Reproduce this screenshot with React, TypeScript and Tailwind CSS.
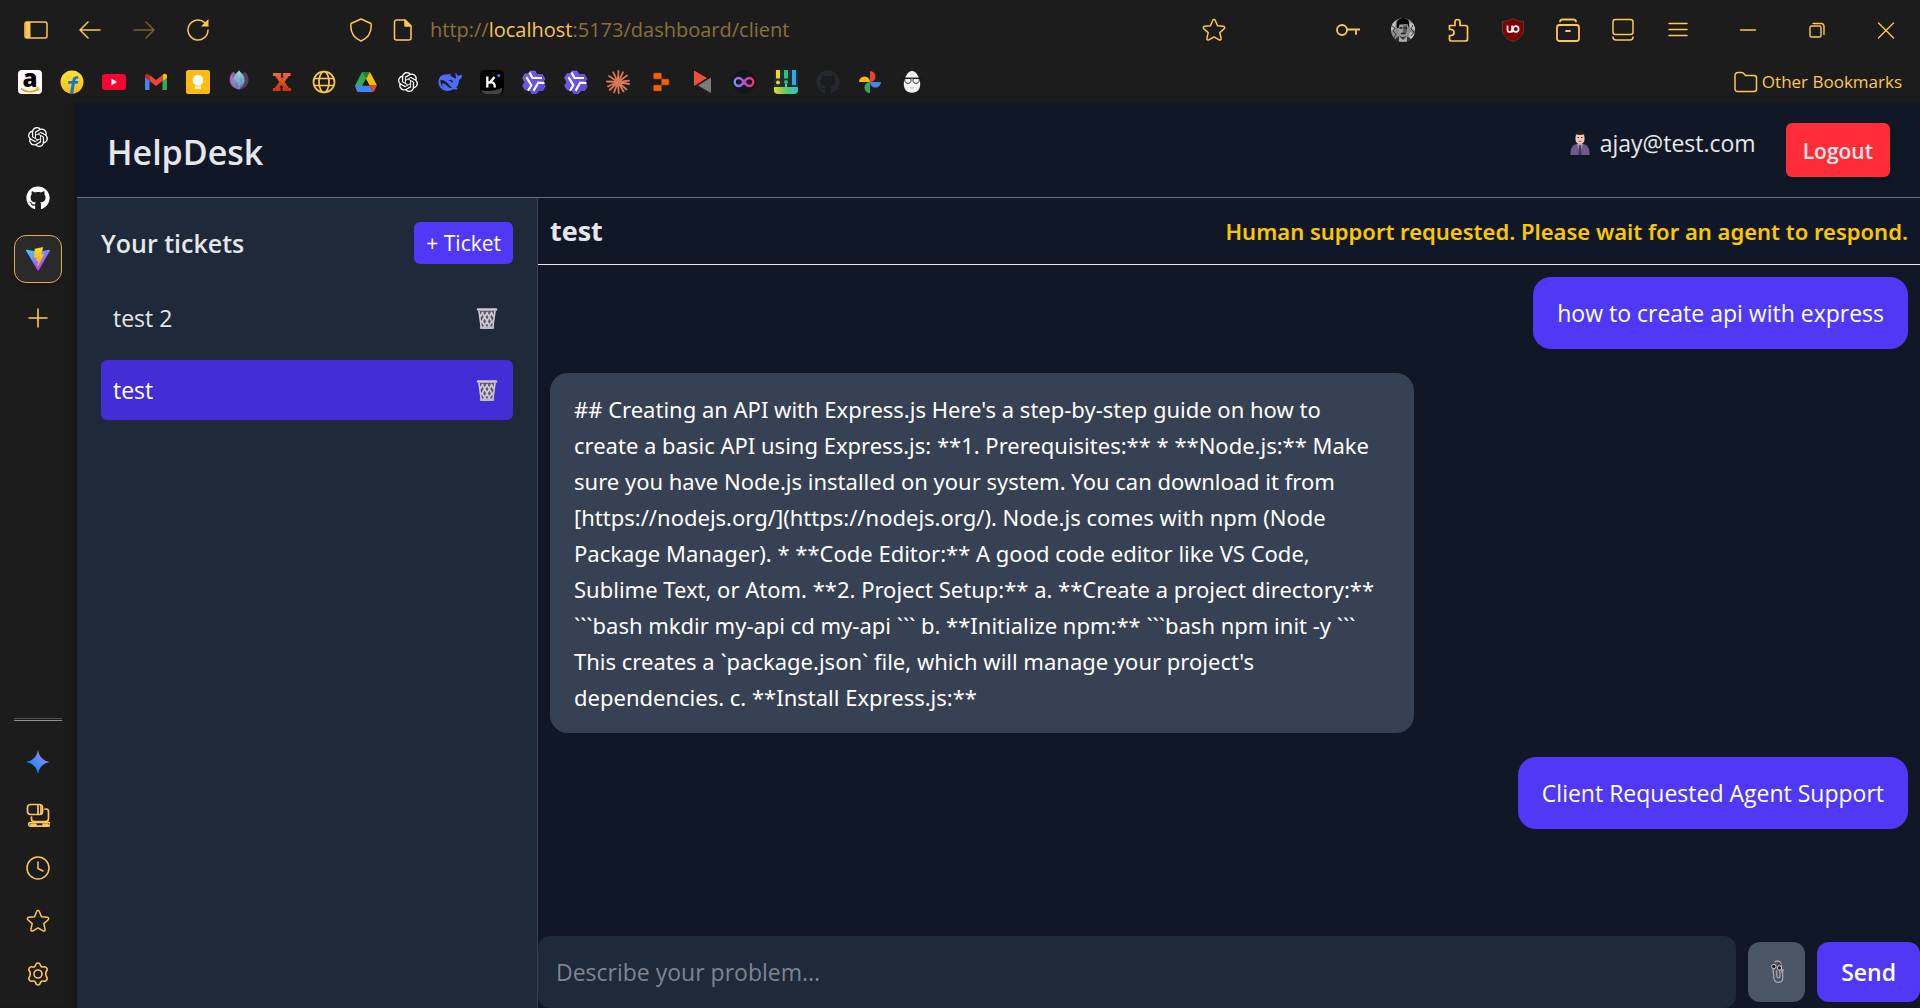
import { useState, type ReactNode } from "react";
import { FaGithub } from "react-icons/fa";
import { SiOpenai } from "react-icons/si";

/* ---------- helpers ---------- */

function Line({ children, width = 1.5 }: { children: ReactNode; width?: number }) {
  return (
    <svg
      viewBox="0 0 24 24"
      className="size-6 shrink-0"
      fill="none"
      stroke="currentColor"
      strokeWidth={width}
      strokeLinecap="round"
      strokeLinejoin="round"
      aria-hidden="true"
    >
      {children}
    </svg>
  );
}

function Art({ children }: { children: ReactNode }) {
  return (
    <svg viewBox="0 0 24 24" className="size-6 shrink-0" aria-hidden="true">
      {children}
    </svg>
  );
}

function IconButton({ label, children }: { label: string; children: ReactNode }) {
  return (
    <button type="button" aria-label={label} className="flex shrink-0 items-center justify-center">
      {children}
    </button>
  );
}

/* ---------- browser icons ---------- */

const STAR =
  "M12 1.5c.6 0 1 .3 1.200.8l2.300 5.400 5.900.600c1.200.1 1.700 1.600.8 2.400l-4.400 3.900 1.300 5.800c.300 1.200-1 2.100-2 1.500L12 18.900l-5.100 3c-1 .6-2.300-.3-2-1.500l1.300-5.800-4.400-3.900c-.9-.8-.4-2.300.8-2.400l5.900-.6 2.300-5.400c.2-.5.600-.8 1.200-.8z";

const StarIcon = () => (
  <Line>
    <path d={STAR} />
  </Line>
);

const SidebarIcon = () => (
  <Line>
    <rect x="1" y="4" width="22" height="16" rx="2" />
    <path d="M1.500 4h5v16h-5z" fill="currentColor" stroke="none" />
  </Line>
);
const BackIcon = () => (
  <Line>
    <path d="M22 12H2M10 4l-8 8 8 8" />
  </Line>
);
const ForwardIcon = () => (
  <Line>
    <path d="M2 12h20M14 4l8 8-8 8" />
  </Line>
);
const ReloadIcon = () => (
  <Line>
    <path d="M22 12a10 10 0 1 1-3.500-7.600" />
    <path d="M22.500 1v7.500H15z" fill="currentColor" stroke="none" />
  </Line>
);
const ShieldIcon = () => (
  <Line>
    <path d="M12 1l10 4.500c.8 7-1.800 14-10 17.500C3.800 19.500 1.200 12.500 2 5.500z" />
  </Line>
);
const FileIcon = () => (
  <Line>
    <path d="M5.500 2h8.500l6 6v12a2 2 0 0 1-2 2H5.500a2 2 0 0 1-2-2V4a2 2 0 0 1 2-2z" />
    <path d="M14 2v6h6z" fill="currentColor" />
  </Line>
);
const KeyIcon = () => (
  <Line width={1.8}>
    <circle cx="6" cy="12" r="5" />
    <path d="M11 11.500h12.500M20 11.500V16" />
  </Line>
);
const PuzzleIcon = () => (
  <Line width={1.7}>
    <path d="M3.500 7.500H9V4a2.500 2.500 0 0 1 5 0v3.500h5.500a2 2 0 0 1 2 2V21a2 2 0 0 1-2 2h-14a2 2 0 0 1-2-2v-3.500H5a3 3 0 0 0 0-6H3.500z" />
  </Line>
);
const ArchiveIcon = () => (
  <Line width={1.8}>
    <rect x="1" y="7" width="22" height="16" rx="2.500" />
    <path d="M4 3.500c.3-1.500 1-2 2.500-2h11c1.500 0 2.200.5 2.500 2M10 13h4" />
  </Line>
);
const TabsIcon = () => (
  <Line>
    <rect x="2" y="1.500" width="20" height="15" rx="2.500" />
    <path d="M2 19c0 2 1 3 3 3h14c2 0 3-1 3-3" />
  </Line>
);
const MenuIcon = () => (
  <Line width={1.5}>
    <path d="M3 5.500h18M3 11.500h18M3 17.500h18" />
  </Line>
);
const MinimizeIcon = () => (
  <Line width={1.4}>
    <path d="M4.500 12h15" />
  </Line>
);
const RestoreIcon = () => (
  <Line width={1.4}>
    <rect x="5" y="8" width="11" height="11" rx="1.500" />
    <path d="M8 5.500h8a3 3 0 0 1 3 3v8" />
  </Line>
);
const CloseIcon = () => (
  <Line width={1.4}>
    <path d="M4.500 5l15 15M19.500 5l-15 15" />
  </Line>
);
const FolderIcon = () => (
  <Line>
    <path d="M1 5.500a3 3 0 0 1 3-3h3.500c1 0 1.500.3 2.200 1l1.800 2H20a2.500 2.500 0 0 1 2.500 2.500v11a2.500 2.500 0 0 1-2.500 2.500H3.500A2.500 2.500 0 0 1 1 19z" />
  </Line>
);
const AvatarIcon = () => (
  <Art>
    <defs>
      <clipPath id="avatarClip">
        <circle cx="12" cy="12" r="12" />
      </clipPath>
    </defs>
    <g clipPath="url(#avatarClip)">
      <path d="M0 0h24v24H0z" fill="#8a8a8a" />
      <path d="M0 3l5-2-1 9-4 3zM18 4l6 3v5l-5-2zM19 14l5 2-2 6-4-3z" fill="#c4c4c4" />
      <path d="M1 8l3 2-2 3 3 3-2 4M22 7l-2 4 3 3-3 4" stroke="#3c3c3c" fill="none" />
      <path d="M4 24c0-5 3-6 8-6s8 2 8 6z" fill="#333" />
      <path d="M8 18l4 4 4-4v6H8z" fill="#aaa" />
      <path d="M7.500 7h9.500c0 7-.5 12-5 12S7 13 7.500 7z" fill="#9b9b9b" />
      <path d="M12 8l4-1c1 4 0 8-2 10l-2-2z" fill="#5a5a5a" />
      <path d="M6 10C4 2 9 0 13 0c4 .5 6 3 5 10l-1.500-4-8 .5L7.500 10z" fill="#080808" />
      <path d="M8.500 10h3M13.500 10h2.500M10 15.500h4" stroke="#1c1c1c" strokeWidth="1.300" />
    </g>
  </Art>
);
const UblockIcon = () => (
  <Art>
    <path
      d="M12 .5c3.500 2 6.500 2.800 10.500 3v8c0 6-4.500 9.500-10.500 12C6 21 1.500 17.500 1.500 11.500v-8C5.500 3.300 8.500 2.500 12 .5z"
      fill="#800000"
      stroke="#565050"
      strokeWidth=".7"
    />
    <path
      d="M6.500 7.500v4.200a2.300 2.300 0 0 0 4.600 0V7.500M11.100 14.500v-6"
      fill="none"
      stroke="#fff"
      strokeWidth="1.700"
    />
    <circle cx="14.800" cy="11" r="2.800" fill="none" stroke="#fff" strokeWidth="1.700" />
  </Art>
);

/* ---------- bookmark icons ---------- */

const AmazonIcon = () => (
  <span className="relative flex size-6 items-center justify-center rounded bg-white">
    <span className="pb-2 font-['Open_Sans',sans-serif] text-[24px] leading-4 font-extrabold text-black">a</span>
    <svg viewBox="0 0 24 24" className="absolute inset-0 size-6" fill="none" stroke="#ff9900" aria-hidden="true">
      <path d="M3 18.500c5 4.200 12 4.200 17 .8" strokeWidth="1.700" />
      <path d="M17.500 18.300c2-.6 3.300-.6 3.500 0s-.4 2-1.200 2.800" strokeWidth="1.100" />
    </svg>
  </span>
);
const FlipkartIcon = () => (
  <Art>
    <defs>
      <linearGradient id="flip" x1="0" y1="0" x2="0" y2="1">
        <stop offset="0" stopColor="#ffe234" />
        <stop offset="1" stopColor="#f3bd1d" />
      </linearGradient>
    </defs>
    <circle cx="12" cy="12" r="11.500" fill="url(#flip)" />
    <path
      d="M18.500 6.500c-3-1-5.500.3-6 3.200l-.3 1.300H8.500l-.6 2.800h3.800L10 23.400c1.300.2 2.300.1 3.200 0l1.600-9.600h3l.6-2.800h-3.100c.3-1.900 1.100-2.400 2.700-2z"
      fill="#1277d3"
    />
  </Art>
);
const YoutubeIcon = () => (
  <Art>
    <rect y="4" width="24" height="16" rx="3" fill="#ff0033" />
    <path d="M9.500 8.800v6.400l5.700-3.200z" fill="#fff" />
  </Art>
);
const GmailIcon = () => (
  <Art>
    <path d="M1 20h4.500V10L1 6.500z" fill="#4285f4" />
    <path d="M18.500 20H23V6.500L18.500 10z" fill="#34a853" />
    <path d="M1 7.500L5.500 11V5L4 4C2.500 3.300 1 4.500 1 6z" fill="#c5221f" />
    <path d="M18.500 11L23 7.500V6c0-2-1.700-2.700-3.200-1.900L18.500 5z" fill="#fbbc04" />
    <path d="M5.500 5L12 10l6.500-5v6L12 16 5.500 11z" fill="#ea4335" />
  </Art>
);
const KeepIcon = () => (
  <Art>
    <rect width="24" height="24" rx="2.500" fill="#fbbc12" />
    <path d="M12 5a5.200 5.200 0 0 0-3 9.500V15.500h6v-1a5.200 5.200 0 0 0-3-9.500zM9 16.500h6v2.200H9z" fill="#fff" />
  </Art>
);
const LotusIcon = () => (
  <Art>
    <defs>
      <linearGradient id="lotus" x1="0" y1="0" x2="0" y2="1">
        <stop offset="0" stopColor="#9adcd8" />
        <stop offset="1" stopColor="#576bb0" />
      </linearGradient>
    </defs>
    <path d="M5 2c-5 4-6 16 7 17.500C19 16 9 3 5 2z" fill="#8b5fa8" />
    <path d="M17 2c5 4 6 16-6 17.500C6 15 13 3 17 2z" fill="#593a66" />
    <path d="M3 5c-2 6 1 12 8 14.500L6 8z" fill="#ab73bd" />
    <path d="M11 .5c4 3.500 6 7 5.500 11-.5 3.500-3 6-5.500 8-2.500-2-5-4.500-5.500-8C5 7.500 7 4 11 .5z" fill="url(#lotus)" />
    <path d="M11 1v18M11 12L6.500 8M11 15l5-5" stroke="#b7e7e6" strokeWidth=".4" />
  </Art>
);
const XIcon = () => (
  <Art>
    <defs>
      <linearGradient id="xGrad" x1="0" y1="0" x2="0" y2="1">
        <stop offset="0" stopColor="#f06544" />
        <stop offset="1" stopColor="#cb3407" />
      </linearGradient>
    </defs>
    <path
      d="M3.500 3.500h7v2H9.500l2.500 4.200 2.800-4.200H13.500v-2h6.500v2h-1.500l-4.500 6.500 4.500 6.500h2v2h-7.500v-2h1.500L11.500 14l-3.200 4.500h1.700v2H3.500v-2H5l5-6.500-4.500-6.500h-2z"
      fill="url(#xGrad)"
      stroke="url(#xGrad)"
      strokeWidth="1.200"
    />
  </Art>
);
const GlobeIcon = () => (
  <Line width={1.7}>
    <circle cx="12" cy="12" r="10.500" />
    <ellipse cx="12" cy="12" rx="5" ry="10.500" />
    <path d="M2.500 8.500h19M2.500 15.500h19" />
  </Line>
);
const DriveIcon = () => (
  <Art>
    <path d="M8 2h8l-4 7-7 12-4-5.500z" fill="#34a853" />
    <path d="M8 2h8l7 13.500h-7.500z" fill="#fbbc04" />
    <path d="M8 2l4 7 4-7z" fill="#188038" />
    <path d="M1 15.500h7.500L5 22c-1 0-2-.5-2.500-1.500zM8.500 15.500h7L19 22H5z" fill="#4285f4" />
    <path d="M15.500 15.500H23l-2.500 5c-.4.900-.9 1.300-1.500 1.500z" fill="#ea4335" />
    <path d="M12 9l3.500 6.500h-7z" fill="#1c1c1c" />
  </Art>
);
const DeepseekIcon = () => (
  <Art>
    <path
      d="M23.700 5c-1.400-.6-2 .6-2.800 1-1-.2-1.800-.9-2.200-2.100-.2-.7-.7-1-1.200-.7-.2 1.200 0 2.500.5 3.500.3.700.3 1.400-.3 1.700-1.900-.3-3.600-1.700-5.200-2.700-.3-.2-.5-.7.1-.9 1-.3.300-.9-.6-.9-1.200 0-2.500.5-4 .6C3.500 4.200.4 7.500.5 12.300c.1 5.200 4.100 8.700 9.300 8.600 2.200 0 4.200-.7 5.700-2 1.400.7 3 .8 3.900.4 1.300-.6.200-.9-1.200-1.400 2.100-2.400 2.900-5.100 2.900-8.100 1.900-.3 3-2.700 3-4.400z"
      fill="#4d6bfe"
    />
    <path
      d="M2.500 9.800c3.700.1 6.300 2 8.500 4.900 1 1.300 1.800 2.300 3.300 3.200-1.500.4-3.100 0-4.200-1.100-1.700-1.800-3.400-3.300-5.200-3.500-1.300-.1-.8 2.700 1.100 4.500-2.500-1.400-3.900-4.800-3.500-8z"
      fill="#1c1c1c"
    />
    <path d="M11.200 10.500c1.800-.6 3 .4 3.400 2.200" fill="none" stroke="#1c1c1c" strokeWidth="1.300" />
  </Art>
);
const KimiIcon = () => (
  <Art>
    <rect width="24" height="24" rx="5" fill="#000" />
    <path d="M1 20c5 2 14 1 21-2v1.500c0 2.500-1.500 4.500-5 4.500H6c-2.500 0-4.500-1.500-5-4z" fill="#565656" opacity=".8" />
    <path d="M7.300 6.500v11M8 12.500h2L14.500 7M10 12.500c3.500-.5 4.800 1 4.800 5" fill="none" stroke="#fff" strokeWidth="2.300" />
    <circle cx="18.700" cy="5.500" r="1.500" fill="#2e8dff" />
  </Art>
);
const QwenIcon = ({ id }: { id: string }) => (
  <Art>
    <defs>
      <linearGradient id={id} x1="0" y1="0" x2="1" y2="1">
        <stop offset="0" stopColor="#7a5cf5" />
        <stop offset="1" stopColor="#5149dc" />
      </linearGradient>
    </defs>
    <path
      d="M8 1h5l2 3.500h5.500L23 9l-2 3.200 2.300 4-2.500 4.300h-4L14.500 23.500H9.700L7.800 20H3.200L.7 15.800 2.700 12 .5 8 3 3.700h3.500z"
      fill={`url(#${id})`}
      stroke="#8f7cf7"
      strokeWidth=".5"
    />
    <path
      d="M7.500 2.500l3 5.500h9.500M22.500 13l-6.300-.3-4.700 8.200M6 20.700l3.300-5.400-4.800-8.200"
      fill="none"
      stroke="#fff"
      strokeWidth="2.200"
    />
  </Art>
);
const ClaudeIcon = () => (
  <Art>
    <path
      d="M12 12L12.400 1M12 12L17 2.300M12 12L21 5.500M12 12L23 10.700M12 12L23 14M12 12L20.500 19.500M12 12L17.500 21.500M12 12L12.700 23.300M12 12L8 22.500M12 12L3.700 20M12 12L2 16.300M12 12L1 11.500M12 12L3 6M12 12L7.300 2.300"
      stroke="#d97757"
      strokeWidth="1.800"
      strokeLinecap="round"
    />
    <circle cx="12" cy="12" r="3.200" fill="#d97757" />
  </Art>
);
const ReplitIcon = () => (
  <Art>
    <path
      d="M6.500 3h6c.6 0 1 .4 1 1v5H6.500c-.6 0-1-.4-1-1V4c0-.6.4-1 1-1zM13.500 9H20c.6 0 1 .4 1 1v4c0 .6-.4 1-1 1h-6.500zM6.500 15h7v5c0 .6-.4 1-1 1h-6c-.6 0-1-.4-1-1v-4c0-.6.4-1 1-1z"
      fill="#f26207"
      stroke="#9c3d03"
      strokeWidth=".6"
    />
  </Art>
);
const TrianglesIcon = () => (
  <Art>
    <path d="M4 .500v15.500L17 8z" fill="#ef5138" />
    <path d="M21 7.500v15.500L8 15.500z" fill="#7b7b7b" />
  </Art>
);
const InfinityIcon = () => (
  <Art>
    <defs>
      <linearGradient id="inf" x1="0" x2="1">
        <stop offset="0" stopColor="#7f8cf5" />
        <stop offset=".5" stopColor="#c04ad6" />
        <stop offset="1" stopColor="#ff2d78" />
      </linearGradient>
    </defs>
    <circle cx="12" cy="12" r="11.500" fill="#10161b" />
    <path
      d="M12 12c-1.800-2.600-3.200-4-5.300-4a4 4 0 0 0 0 8c2.100 0 3.500-1.400 5.300-4s3.200-4 5.300-4a4 4 0 0 1 0 8c-2.100 0-3.500-1.400-5.300-4z"
      fill="none"
      stroke="url(#inf)"
      strokeWidth="2.400"
    />
  </Art>
);
const PipesIcon = () => (
  <Art>
    <defs>
      <linearGradient id="pipes" x1="0" x2="1">
        <stop offset="0" stopColor="#f2d21a" />
        <stop offset=".5" stopColor="#5cc96b" />
        <stop offset="1" stopColor="#38bfc4" />
      </linearGradient>
    </defs>
    <rect width="24" height="24" rx="4" fill="#18303c" />
    <path d="M0 17h24v3a4 4 0 0 1-4 4H4a4 4 0 0 1-4-4z" fill="url(#pipes)" />
    <path d="M2 0h4v8.500H2z" fill="#ffd21f" />
    <circle cx="4" cy="12.500" r="2" fill="#ffd21f" />
    <path d="M10 0h4v8.500h-4z" fill="#2bc275" />
    <circle cx="12" cy="12" r="2" fill="#2bc275" />
    <path d="M11 14h2v4h-2z" fill="#5cc96b" />
    <path d="M18 0h4v15h-4z" fill="#2fa9e0" />
  </Art>
);
const PhotosIcon = () => (
  <Art>
    <path d="M12 12V1a5.500 5.500 0 0 1 0 11z" fill="#ea4335" />
    <path d="M12 12h11a5.500 5.500 0 0 1-11 0z" fill="#4285f4" />
    <path d="M12 12v11a5.500 5.500 0 0 1 0-11z" fill="#34a853" />
    <path d="M12 12H1a5.500 5.500 0 0 1 11 0z" fill="#fbbc04" />
  </Art>
);
const EggheadIcon = () => (
  <Art>
    <path d="M12 1c4.500 0 8.200 7.500 8.200 13 0 5.500-3.200 8.700-8.200 8.700S3.800 19.500 3.800 14C3.800 8.500 7.500 1 12 1z" fill="#f4f4f4" />
    <path
      d="M1.500 8h21M4.800 8.500h6.200v2c0 1.900-1.200 2.800-2.900 2.800s-3.300-.9-3.300-2.800zM13 8.500h6.200v2c0 1.900-1.600 2.800-3.300 2.800S13 12.400 13 10.500z"
      fill="none"
      stroke="#111"
      strokeWidth=".9"
    />
    <path d="M10 17.500c1.500.6 2.500.6 4 0" fill="none" stroke="#999" strokeWidth=".7" />
  </Art>
);

const bookmarks: { name: string; icon: ReactNode }[] = [
  { name: "Amazon", icon: <AmazonIcon /> },
  { name: "Flipkart", icon: <FlipkartIcon /> },
  { name: "YouTube", icon: <YoutubeIcon /> },
  { name: "Gmail", icon: <GmailIcon /> },
  { name: "Keep", icon: <KeepIcon /> },
  { name: "Lotus", icon: <LotusIcon /> },
  { name: "X", icon: <XIcon /> },
  { name: "Website", icon: <GlobeIcon /> },
  { name: "Drive", icon: <DriveIcon /> },
  { name: "ChatGPT", icon: <SiOpenai className="m-0.5 size-5 text-white" /> },
  { name: "DeepSeek", icon: <DeepseekIcon /> },
  { name: "Kimi", icon: <KimiIcon /> },
  { name: "Qwen", icon: <QwenIcon id="qwenA" /> },
  { name: "Qwen Chat", icon: <QwenIcon id="qwenB" /> },
  { name: "Claude", icon: <ClaudeIcon /> },
  { name: "Replit", icon: <ReplitIcon /> },
  { name: "Play", icon: <TrianglesIcon /> },
  { name: "Infinity", icon: <InfinityIcon /> },
  { name: "Pipes", icon: <PipesIcon /> },
  { name: "GitHub", icon: <FaGithub className="size-6 text-[#24292f]" /> },
  { name: "Photos", icon: <PhotosIcon /> },
  { name: "Egghead", icon: <EggheadIcon /> },
];

/* ---------- rail icons ---------- */

const ViteIcon = () => (
  <Art>
    <defs>
      <linearGradient id="viteA" x1="0" y1="0" x2=".6" y2="1">
        <stop offset="0" stopColor="#41d1ff" />
        <stop offset="1" stopColor="#bd34fe" />
      </linearGradient>
      <linearGradient id="viteB" x1="0" y1="0" x2="0" y2="1">
        <stop offset="0" stopColor="#ffd930" />
        <stop offset="1" stopColor="#ffa800" />
      </linearGradient>
    </defs>
    <path d="M23.900 3.700L12.700 23.500c-.2.400-.8.400-1 0L.1 3.700c-.3-.5.100-1 .6-.9L12.200 4.800 23.300 2.800c.5-.1.900.4.600.9z" fill="url(#viteA)" />
    <path d="M17.200.1L9 1.700c-.2 0-.3.200-.3.300l-.5 8.700c0 .2.200.4.400.3l2.400-.5-.7 3.900 1.800-.5-.9 5.300c0 .4.400.5.600.2L18 7.500c.1-.2-.1-.5-.4-.5l-2.300.5 1.800-7c.1-.2 0-.4.100-.4z" fill="url(#viteB)" />
  </Art>
);
const SparkIcon = () => (
  <Art>
    <defs>
      <linearGradient id="spark" x1="0" y1="1" x2="1" y2="0">
        <stop offset=".2" stopColor="#1c86fb" />
        <stop offset=".5" stopColor="#4a8bf8" />
        <stop offset="1" stopColor="#d08fd0" />
      </linearGradient>
    </defs>
    <path d="M12 0c.9 6.500 5.500 11.100 12 12-6.500.9-11.100 5.500-12 12-.9-6.500-5.500-11.100-12-12C6.500 11.100 11.100 6.500 12 0z" fill="url(#spark)" />
  </Art>
);
const DevicesIcon = () => (
  <Line width={1.7}>
    <rect x="1.500" y="1.500" width="15" height="10" rx="3" />
    <path d="M12 2v9M15 2.500v8" />
    <path d="M19 6h1a2.500 2.500 0 0 1 2.500 2.500v7c0 2-1 3-2.500 3H8c-2 0-2.500-1-2.500-2.500V14" />
    <path d="M4.500 19.500h18a1.800 1.800 0 0 1 0 3.600h-18a1.800 1.800 0 0 1 0-3.600zM5 21.300h5M17 21.300h5" />
  </Line>
);
const ClockIcon = () => (
  <Line>
    <circle cx="12" cy="12" r="11" />
    <path d="M12 6v6.500l5 2.500" />
  </Line>
);
const GearIcon = () => (
  <Line width={1.6}>
    <path d="M10 2.200c.4-1.600 3.600-1.600 4 0 .5 2.500 2 3.300 4.300 2.600 1.600-.5 3.800 2.300 2.700 3.600-1.700 1.900-1.700 5.300 0 7.200 1.100 1.300-1.100 4.100-2.700 3.600-2.300-.7-3.800.1-4.300 2.600-.4 1.600-3.600 1.600-4 0-.5-2.500-2-3.300-4.300-2.600-1.600.5-3.800-2.300-2.700-3.600 1.700-1.900 1.700-5.300 0-7.200C1.900 7.100 4.100 4.300 5.700 4.800 8 5.500 9.500 4.700 10 2.200z" />
    <circle cx="12" cy="12" r="4" />
  </Line>
);
const PlusIcon = () => (
  <Line width={1.6}>
    <path d="M12 3v18M3 12h18" />
  </Line>
);

/* ---------- app icons ---------- */

const TrashIcon = () => (
  <svg viewBox="0 0 24 24" className="size-6" aria-hidden="true">
    <path d="M3.500 4.500h17L18 22H6z" fill="#5f566b" />
    <path d="M3 3.500h18" stroke="#cfc9d3" strokeWidth="2.500" strokeLinecap="round" />
    <path
      d="M4 5l2.200 16.500M20 5l-2.200 16.500M7 6l8 15M11.500 6l6 10.500M16 6l2.500 4.500M17 6L9 21M12.500 6l-6 10.500M8 6l-2.500 4.500M6.500 14.500L11 21.500M17.500 14.500L13 21.500"
      stroke="#cfc9d3"
      strokeWidth="1.600"
      fill="none"
    />
    <path d="M6 21.700h12" stroke="#bfb8c5" strokeWidth="2.400" strokeLinecap="round" />
  </svg>
);
const ManIcon = () => (
  <svg viewBox="0 0 24 24" className="size-6" aria-hidden="true">
    <path d="M2.500 24c-.5-6 1.500-10 6-11h7c4.500 1 6.500 5 6 11z" fill="#6d5a8d" />
    <path d="M9 12.500l3 11.500 3-11.500z" fill="#9f92b8" />
    <path d="M11.200 14h1.600l.8 10h-3.200z" fill="#43365e" />
    <path d="M10 10h4v3l-2 1.500-2-1.500z" fill="#d9a48d" />
    <rect x="7.500" y="1.500" width="9" height="11" rx="4" fill="#f3c9b4" />
    <path d="M7 6c-.5-4 2-6 5-6s5.500 2 5 6l-1.200-2.500c-2.500.5-5 .5-7.600 0z" fill="#241d22" />
    <path d="M9.500 6.500h1.500M13 6.500h1.500" stroke="#3b2a2a" strokeWidth="1" />
    <path d="M10.500 10.300h3" stroke="#b44a50" strokeWidth="1" />
  </svg>
);
const ClipIcon = () => (
  <svg viewBox="0 0 24 24" className="size-6" fill="none" aria-hidden="true">
    <path
      d="M9 3c2-3 6.500-2.500 7 1l.7 6.500M8 8l.8 9.500c.3 6 9 6.800 9 .5L17.500 10M11.500 11l.3 5c.2 2.500 3.200 2.500 3.200 0l-.3-5M16.500 12l2-2"
      stroke="#a9a6ab"
      strokeWidth="1.300"
      strokeLinecap="round"
    />
    <path d="M7 4c1-1.300 2-1.500 3.200-1M13 3c1.500 0 2.500.6 3.300 2" stroke="#3b2c2c" />
    <circle cx="8.800" cy="6.500" r="2.200" fill="#2b1d1d" stroke="#ddd" strokeWidth=".9" />
    <circle cx="14.500" cy="8" r="2.200" fill="#2b1d1d" stroke="#ddd" strokeWidth=".9" />
  </svg>
);

/* ---------- browser chrome ---------- */

function Toolbar() {
  return (
    <div className="flex h-[60px] items-center pr-[22px] pl-6">
      <div className="flex gap-[30px]">
        <IconButton label="Toggle sidebar"><SidebarIcon /></IconButton>
        <IconButton label="Back"><BackIcon /></IconButton>
        <span className="flex text-[#7a6230]"><IconButton label="Forward"><ForwardIcon /></IconButton></span>
        <IconButton label="Reload"><ReloadIcon /></IconButton>
      </div>
      <div className="mr-[110px] ml-[139px] flex flex-1 items-center">
        <IconButton label="Tracking protection"><ShieldIcon /></IconButton>
        <span className="ml-[18px] flex"><IconButton label="Site information"><FileIcon /></IconButton></span>
        <a
          href="http://localhost:5173/dashboard/client"
          className="ml-[15px] flex-1 text-[20px] leading-7 whitespace-nowrap text-[#8c7038]"
        >
          http://<span className="text-[#f9c550]">localhost</span>:5173/dashboard/client
        </a>
        <IconButton label="Bookmark this page"><StarIcon /></IconButton>
      </div>
      <div className="flex gap-[31px]">
        <IconButton label="Passwords"><KeyIcon /></IconButton>
        <IconButton label="Profile"><AvatarIcon /></IconButton>
        <IconButton label="Extensions"><PuzzleIcon /></IconButton>
        <IconButton label="uBlock Origin"><UblockIcon /></IconButton>
        <IconButton label="Collections"><ArchiveIcon /></IconButton>
        <IconButton label="Tabs"><TabsIcon /></IconButton>
        <IconButton label="Menu"><MenuIcon /></IconButton>
      </div>
      <div className="ml-[46px] flex gap-[45px]">
        <IconButton label="Minimize"><MinimizeIcon /></IconButton>
        <IconButton label="Restore"><RestoreIcon /></IconButton>
        <IconButton label="Close"><CloseIcon /></IconButton>
      </div>
    </div>
  );
}

function BookmarkBar() {
  return (
    <nav className="flex h-[43px] items-center justify-between px-[18px]" aria-label="Bookmarks">
      <div className="flex gap-[18px]">
        {bookmarks.map((b) => (
          <a key={b.name} href="#" aria-label={b.name} className="flex size-6 items-center justify-center">
            {b.icon}
          </a>
        ))}
      </div>
      <button type="button" className="flex items-center gap-1 text-[17px] leading-6 whitespace-nowrap">
        <FolderIcon />
        Other Bookmarks
      </button>
    </nav>
  );
}

function Rail() {
  return (
    <aside className="flex w-[77px] shrink-0 flex-col items-center justify-between pt-[10px] pr-0.5 pb-[22px] shadow-[inset_-8px_0_8px_-6px_rgba(0,0,0,0.35)]">
      <div className="flex flex-col items-center gap-[13px]">
        <button type="button" aria-label="ChatGPT tab" className="flex size-12 items-center justify-center text-white">
          <SiOpenai className="size-5" />
        </button>
        <button type="button" aria-label="GitHub tab" className="flex size-12 items-center justify-center text-white">
          <FaGithub className="size-6" />
        </button>
        <button
          type="button"
          aria-label="HelpDesk tab"
          className="flex size-12 items-center justify-center rounded-xl border border-[#e0af45] bg-[#2a2a2a] shadow-md"
        >
          <ViteIcon />
        </button>
        <button type="button" aria-label="New tab" className="flex h-11 w-12 items-center justify-center">
          <PlusIcon />
        </button>
      </div>
      <div className="flex flex-col items-center gap-[29px]">
        <hr className="h-[3px] w-12 border-t border-b border-t-[#5b4f45] border-b-[#8a8f9c]" />
        <IconButton label="AI assistant"><SparkIcon /></IconButton>
        <IconButton label="Synced devices"><DevicesIcon /></IconButton>
        <IconButton label="History"><ClockIcon /></IconButton>
        <IconButton label="Bookmarks"><StarIcon /></IconButton>
        <IconButton label="Settings"><GearIcon /></IconButton>
      </div>
    </aside>
  );
}

/* ---------- help desk app ---------- */

const REPLY = [
  "## Creating an API with Express.js Here's a step-by-step guide on how to",
  "create a basic API using Express.js: **1. Prerequisites:** * **Node.js:** Make",
  "sure you have Node.js installed on your system. You can download it from",
  "[https://nodejs.org/](https://nodejs.org/). Node.js comes with npm (Node",
  "Package Manager). * **Code Editor:** A good code editor like VS Code,",
  "Sublime Text, or Atom. **2. Project Setup:** a. **Create a project directory:**",
  "```bash mkdir my-api cd my-api ``` b. **Initialize npm:** ```bash npm init -y ```",
  "This creates a `package.json` file, which will manage your project's",
  "dependencies. c. **Install Express.js:**",
].join("\n");

const tickets = ["test 2", "test"];

function Header() {
  return (
    <header className="flex items-center justify-between border-b border-gray-500 py-5 pr-[30px] pl-[30px]">
      <h1 className="pt-1 text-[34px] leading-[50px] font-semibold">HelpDesk</h1>
      <div className="flex items-start gap-[30px]">
        <p className="flex items-center gap-2 text-[23px] leading-10">
          <ManIcon />
          ajay@test.com
        </p>
        <button type="button" className="rounded-md bg-[#ff2d37] px-[17px] pt-0.5 text-[21px] leading-[52px] font-semibold shadow-md">
          Logout
        </button>
      </div>
    </header>
  );
}

function TicketList() {
  const [active, setActive] = useState("test");
  return (
    <aside className="w-[461px] shrink-0 border-r border-gray-700 bg-gray-800 p-6">
      <div className="flex items-center justify-between">
        <h2 className="text-[25px] leading-[42px] font-semibold">Your tickets</h2>
        <button type="button" className="rounded-md bg-indigo-600 px-3 text-[21px] leading-[42px] text-white">
          + Ticket
        </button>
      </div>
      <ul className="mt-6 flex flex-col gap-3">
        {tickets.map((t) => (
          <li
            key={t}
            className={
              t === active
                ? "flex items-center rounded-md bg-indigo-700 pr-3.5 pl-3 text-white"
                : "flex items-center rounded-md pr-3.5 pl-3"
            }
          >
            <button type="button" onClick={() => setActive(t)} className="flex-1 text-left text-[23px] leading-[60px]">
              {t}
            </button>
            <IconButton label={`Delete ${t}`}><TrashIcon /></IconButton>
          </li>
        ))}
      </ul>
    </aside>
  );
}

function Chat() {
  return (
    <main className="flex min-w-0 flex-1 flex-col">
      <div className="flex items-center justify-between border-b border-gray-200 px-3 py-[15px]">
        <h2 className="text-[27px] leading-9 font-bold">test</h2>
        <p className="font-['Noto_Sans','Open_Sans',sans-serif] text-[22px] leading-9 font-semibold text-yellow-400">
          Human support requested. Please wait for an agent to respond.
        </p>
      </div>
      <div className="flex flex-1 flex-col gap-6 p-3 text-[23px] leading-9 text-white">
        <p className="max-w-[864px] self-end rounded-[18px] bg-indigo-600 px-6 py-[18px]">how to create api with express</p>
        <p className="w-full max-w-[864px] self-start rounded-[18px] bg-gray-700 px-6 py-[18px] font-['Noto_Sans','Open_Sans',sans-serif] text-[22px] whitespace-pre-line">
          {REPLY}
        </p>
        <p className="max-w-[864px] self-end rounded-[18px] bg-indigo-600 px-6 py-[18px]">Client Requested Agent Support</p>
      </div>
      <form className="flex items-center gap-3" onSubmit={(e) => e.preventDefault()}>
        <input
          type="text"
          aria-label="Describe your problem"
          placeholder="Describe your problem..."
          className="h-[72px] min-w-0 flex-1 rounded-xl bg-gray-800 px-[18px] text-[23px] outline-none placeholder:text-[#7e8591]"
        />
        <button type="button" aria-label="Attach a file" className="flex h-[60px] w-[57px] items-center justify-center rounded-xl bg-gray-600">
          <ClipIcon />
        </button>
        <button type="submit" className="rounded-xl bg-indigo-600 px-6 text-[23px] leading-[60px] font-semibold text-white">
          Send
        </button>
      </form>
    </main>
  );
}

export default function App() {
  return (
    <div className="flex min-h-screen flex-col bg-[#1c1c1c] font-['Open_Sans','Noto_Sans',sans-serif] text-[#fec84f]">
      <Toolbar />
      <BookmarkBar />
      <div className="flex flex-1">
        <Rail />
        <div className="flex min-w-0 flex-1 flex-col bg-gray-900 text-gray-200">
          <Header />
          <div className="flex flex-1">
            <TicketList />
            <Chat />
          </div>
        </div>
      </div>
    </div>
  );
}
